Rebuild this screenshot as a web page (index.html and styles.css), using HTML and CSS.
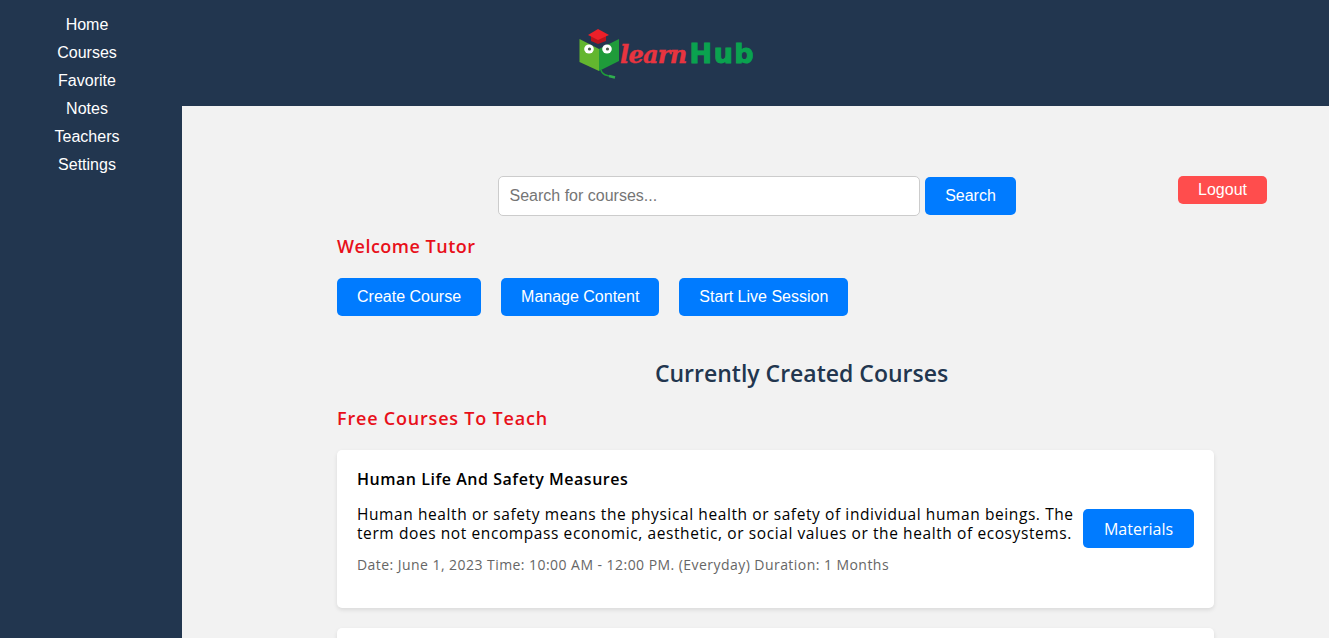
FILE: index.html
```html
<!DOCTYPE html>
<html lang="en">
<head>
  <meta charset="UTF-8">
  <meta name="viewport" content="width=device-width, initial-scale=1.0">
  <title>LearnHub</title>
  <link rel="stylesheet" href="styles.css">
</head>
<body>
  <div class="layout">
    <nav class="sidebar">
      <a href="#" class="nav-link">Home</a>
      <a href="#" class="nav-link">Courses</a>
      <a href="#" class="nav-link">Favorite</a>
      <a href="#" class="nav-link">Notes</a>
      <a href="#" class="nav-link">Teachers</a>
      <a href="#" class="nav-link">Settings</a>
    </nav>

    <div class="page">
      <header class="header">
        <div class="logo">
          <svg class="logo-mark" width="42" height="52" viewBox="0 0 42 52">
            <path d="M1.500 11 L21 21 L21 43 L1.500 34 Z" fill="#63b62f"/>
            <path d="M21 21 L41 11 L41 33 L21 43 Z" fill="#1f9b3a"/>
            <ellipse cx="11" cy="21" rx="4.800" ry="4.500" fill="#fff"/>
            <ellipse cx="29" cy="21" rx="4.800" ry="4.500" fill="#fff"/>
            <circle cx="11.500" cy="21" r="1.600" fill="#4a5a4a"/>
            <circle cx="29.500" cy="21" r="1.600" fill="#4a5a4a"/>
            <path d="M13 8 L13 13 L20 16 L28 13 L28 8 Z" fill="#b8141c"/>
            <path d="M20 1 L31 7 L20 12 L10 7 Z" fill="#ec2029"/>
            <path d="M23 42 C24 47 28 47 31 48" fill="none" stroke="#1f9b3a" stroke-width="1.500"/>
            <path d="M31 48 L37 49.500" fill="none" stroke="#2fae4e" stroke-width="2.500"/>
          </svg>
          <div class="logo-text"><span class="logo-learn">learn</span><span class="logo-hub">Hub</span></div>
        </div>
      </header>

      <main class="main">
        <div class="top-row">
          <form class="search">
            <input class="search-input" type="text" placeholder="Search for courses...">
            <button class="btn search-btn" type="button">Search</button>
          </form>
          <button class="logout" type="button">Logout</button>
        </div>

        <div class="content">
          <h2 class="welcome">Welcome Tutor</h2>
          <div class="actions">
            <button class="btn action-btn" type="button">Create Course</button>
            <button class="btn action-btn" type="button">Manage Content</button>
            <button class="btn action-btn" type="button">Start Live Session</button>
          </div>

          <h1 class="section-title">Currently Created Courses</h1>
          <h2 class="free-title">Free Courses To Teach</h2>

          <div class="course-card">
            <h3 class="course-name">Human Life And Safety Measures</h3>
            <div class="course-body">
              <p class="course-text">Human health or safety means the physical health or safety of individual human beings. The term does not encompass economic, aesthetic, or social values or the health of ecosystems.</p>
              <button class="btn materials-btn" type="button">Materials</button>
            </div>
            <p class="course-meta">Date: June 1, 2023 Time: 10:00 AM - 12:00 PM. (Everyday) Duration: 1 Months</p>
          </div>

          <div class="course-card"></div>
        </div>
      </main>
    </div>
  </div>
</body>
</html>
```

FILE: styles.css
```css
* {
  margin: 0;
  padding: 0;
  box-sizing: border-box;
}

html, body {
  height: 100%;
  overflow: hidden;
}

body {
  font-family: "Liberation Sans", Arial, sans-serif;
  background: #f2f2f2;
}

.layout {
  display: flex;
  height: 638px;
  overflow: hidden;
}

.sidebar {
  width: 182px;
  flex-shrink: 0;
  background: #22364f;
  padding: 11px 8px 0 0;
  display: flex;
  flex-direction: column;
  align-items: center;
}

.nav-link {
  color: #fff;
  font-size: 16px;
  line-height: 28px;
  text-decoration: none;
}

.page {
  flex: 1;
  min-width: 0;
}

.header {
  height: 106px;
  background: #22364f;
  padding: 28px 0 0 396px;
}

.logo {
  display: flex;
  align-items: flex-start;
  width: 190px;
}

.logo-mark {
  flex-shrink: 0;
}

.logo-text {
  margin-top: 10px;
  white-space: nowrap;
}

.logo-learn {
  color: #e8343f;
  font-family: "DejaVu Serif", serif;
  font-size: 24px;
  font-weight: bold;
  font-style: italic;
  letter-spacing: -0.7px;
  -webkit-text-stroke: 0.4px #e8343f;
}

.logo-hub {
  margin-left: 3px;
  color: #0aa24f;
  font-family: "DejaVu Sans", sans-serif;
  font-size: 27px;
  font-weight: bold;
  letter-spacing: 1.5px;
  -webkit-text-stroke: 1px #0aa24f;
}

.main {
  padding-top: 70px;
}

.top-row {
  display: flex;
  align-items: flex-start;
  padding-left: 316px;
}

.search {
  display: flex;
  align-items: center;
  gap: 5px;
}

.search-input {
  width: 422px;
  height: 40px;
  padding: 0 10.500px;
  border: 1px solid #ccc;
  border-radius: 5px;
  background: #fff;
  font-family: "Liberation Sans", Arial, sans-serif;
  font-size: 16px;
}

.btn {
  border: none;
  border-radius: 5px;
  background: #007bff;
  color: #fff;
  font-family: "Liberation Sans", Arial, sans-serif;
  font-size: 16px;
}

.search-btn {
  width: 91px;
  height: 38px;
}

.logout {
  width: 89px;
  height: 28px;
  margin-left: 162px;
  border: none;
  border-radius: 5px;
  background: #ff4d4d;
  color: #fff;
  font-family: "Liberation Sans", Arial, sans-serif;
  font-size: 16px;
}

.content {
  width: 877px;
  margin-left: 155px;
}

.welcome,
.free-title {
  color: #e8101a;
  font-family: "Open Sans", sans-serif;
  font-size: 18px;
  font-weight: 600;
  line-height: 24px;
}

.welcome {
  margin-top: 18px;
  letter-spacing: 0.5px;
}

.actions {
  display: flex;
  gap: 20px;
  margin-top: 20px;
}

.action-btn {
  height: 38px;
  padding: 0 20px;
}

.section-title {
  margin-top: 41px;
  padding-left: 52px;
  text-align: center;
  color: #22364f;
  font-family: "Open Sans", sans-serif;
  font-size: 23px;
  font-weight: 600;
  line-height: 32px;
}

.free-title {
  margin-top: 17px;
  letter-spacing: 0.8px;
}

.course-card {
  height: 158px;
  margin-top: 20px;
  padding: 19px 20px;
  border-radius: 5px;
  background: #fff;
  box-shadow: 0 2px 4px rgba(0, 0, 0, 0.1);
}

.course-name {
  color: #000;
  font-family: "Open Sans", sans-serif;
  font-size: 16px;
  font-weight: 600;
  letter-spacing: 0.53px;
  line-height: 20px;
}

.course-body {
  display: flex;
  align-items: flex-start;
  gap: 2px;
  margin-top: 16px;
}

.course-text {
  flex: 1;
  color: #000;
  font-family: "Open Sans", sans-serif;
  font-size: 15.500px;
  letter-spacing: 0.59px;
  line-height: 19px;
}

.materials-btn {
  width: 111px;
  height: 39px;
  margin-top: 4px;
  flex-shrink: 0;
  font-family: "Open Sans", sans-serif;
}

.course-meta {
  margin-top: 8px;
  color: #666;
  font-family: "Open Sans", sans-serif;
  font-size: 14px;
  letter-spacing: 0.45px;
  line-height: 18px;
}
```
